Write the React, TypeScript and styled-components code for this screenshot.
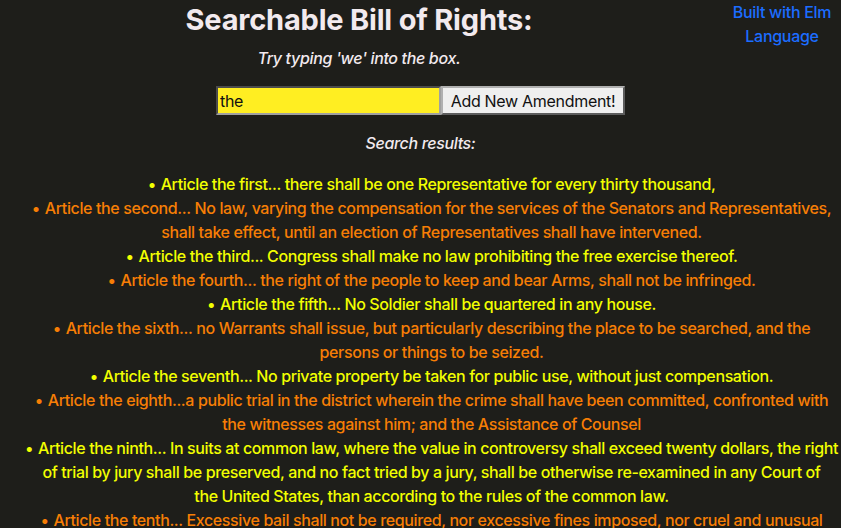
import React from "react";
import styled, { createGlobalStyle } from "styled-components";

const Global = createGlobalStyle`
  html, body { margin: 0; padding: 0; background: #1e1e1a; }
  body { font-family: Inter, "Noto Sans", "Liberation Sans", sans-serif; overflow: hidden; }
`;

const Page = styled.div`
  width: 841px;
  height: 528px;
  background: #1e1e1a;
  color: #f0e8ec;
`;

const Header = styled.header`
  display: flex;
  align-items: flex-start;
`;

const Intro = styled.div`
  flex: 1;
  text-align: center;
`;

const Title = styled.h1`
  margin: 0;
  font-size: 29px;
  line-height: 40px;
  font-weight: 700;
  color: #f2eaee;
  letter-spacing: -0.2px;
`;

const Hint = styled.p`
  margin: 6px 0 0;
  font-size: 16px;
  line-height: 24px;
  font-style: italic;
  font-weight: 500;
  letter-spacing: -0.35px;
  color: #f2eaee;
`;

const ElmLink = styled.a`
  box-sizing: border-box;
  width: 123px;
  padding-left: 5px;
  text-align: center;
  font-size: 16px;
  line-height: 24px;
  font-weight: 500;
  letter-spacing: -0.3px;
  color: #1c6dff;
  text-decoration: none;
`;

const Form = styled.div`
  display: flex;
  justify-content: center;
  margin-top: 16px;
`;

const SearchInput = styled.input`
  box-sizing: border-box;
  width: 225px;
  height: 29px;
  background: #ffee22;
  border: 2px inset #a0a0a0;
  padding: 0 2px;
  font-family: inherit;
  font-size: 16px;
  letter-spacing: -0.3px;
  color: #111;
  outline: none;
`;

const AddButton = styled.button`
  box-sizing: border-box;
  width: 184px;
  height: 29px;
  background: #efefef;
  border: 2px outset #b0b0b0;
  font-family: inherit;
  font-size: 16px;
  letter-spacing: -0.3px;
  color: #111;
  padding: 0;
`;

const ResultsLabel = styled.p`
  margin: 16px 0 0;
  text-align: center;
  font-size: 16px;
  line-height: 24px;
  font-style: italic;
  font-weight: 500;
  letter-spacing: -0.35px;
  color: #f2eaee;
`;

const Results = styled.ul`
  margin: 17px 0 0;
  padding: 0 0 0 22px;
  list-style: none;
  text-align: center;
`;

const Item = styled.li<{ $alt: boolean }>`
  font-size: 16px;
  line-height: 24px;
  font-weight: 500;
  letter-spacing: -0.38px;
  color: ${(p) => (p.$alt ? "#f77e05" : "#f2ff00")};

  &::before {
    content: "•";
    display: inline-block;
    width: 13px;
    text-align: left;
  }
`;

const articles = [
  "Article the first... there shall be one Representative for every thirty thousand,",
  "Article the second... No law, varying the compensation for the services of the Senators and Representatives, shall take effect, until an election of Representatives shall have intervened.",
  "Article the third... Congress shall make no law prohibiting the free exercise thereof.",
  "Article the fourth... the right of the people to keep and bear Arms, shall not be infringed.",
  "Article the fifth... No Soldier shall be quartered in any house.",
  "Article the sixth... no Warrants shall issue, but particularly describing the place to be searched, and the persons or things to be seized.",
  "Article the seventh... No private property be taken for public use, without just compensation.",
  "Article the eighth...a public trial in the district wherein the crime shall have been committed, confronted with the witnesses against him; and the Assistance of Counsel",
  "Article the ninth... In suits at common law, where the value in controversy shall exceed twenty dollars, the right of trial by jury shall be preserved, and no fact tried by a jury, shall be otherwise re-examined in any Court of the\u00a0United States, than according to the rules of the common law.",
  "Article the tenth... Excessive bail shall not be required, nor excessive fines imposed, nor cruel and unusual punishments inflicted.",
];

export default function App() {
  return (
    <Page>
      <Global />
      <Header>
        <Intro>
          <Title>Searchable Bill of Rights:</Title>
          <Hint>Try typing 'we' into the box.</Hint>
        </Intro>
        <ElmLink href="#">Built with Elm Language</ElmLink>
      </Header>
      <Form>
        <SearchInput defaultValue="the" />
        <AddButton>Add New Amendment!</AddButton>
      </Form>
      <ResultsLabel>Search results:</ResultsLabel>
      <Results>
        {articles.map((a, i) => (
          <Item key={i} $alt={i % 2 === 1}>
            {a}
          </Item>
        ))}
      </Results>
    </Page>
  );
}
